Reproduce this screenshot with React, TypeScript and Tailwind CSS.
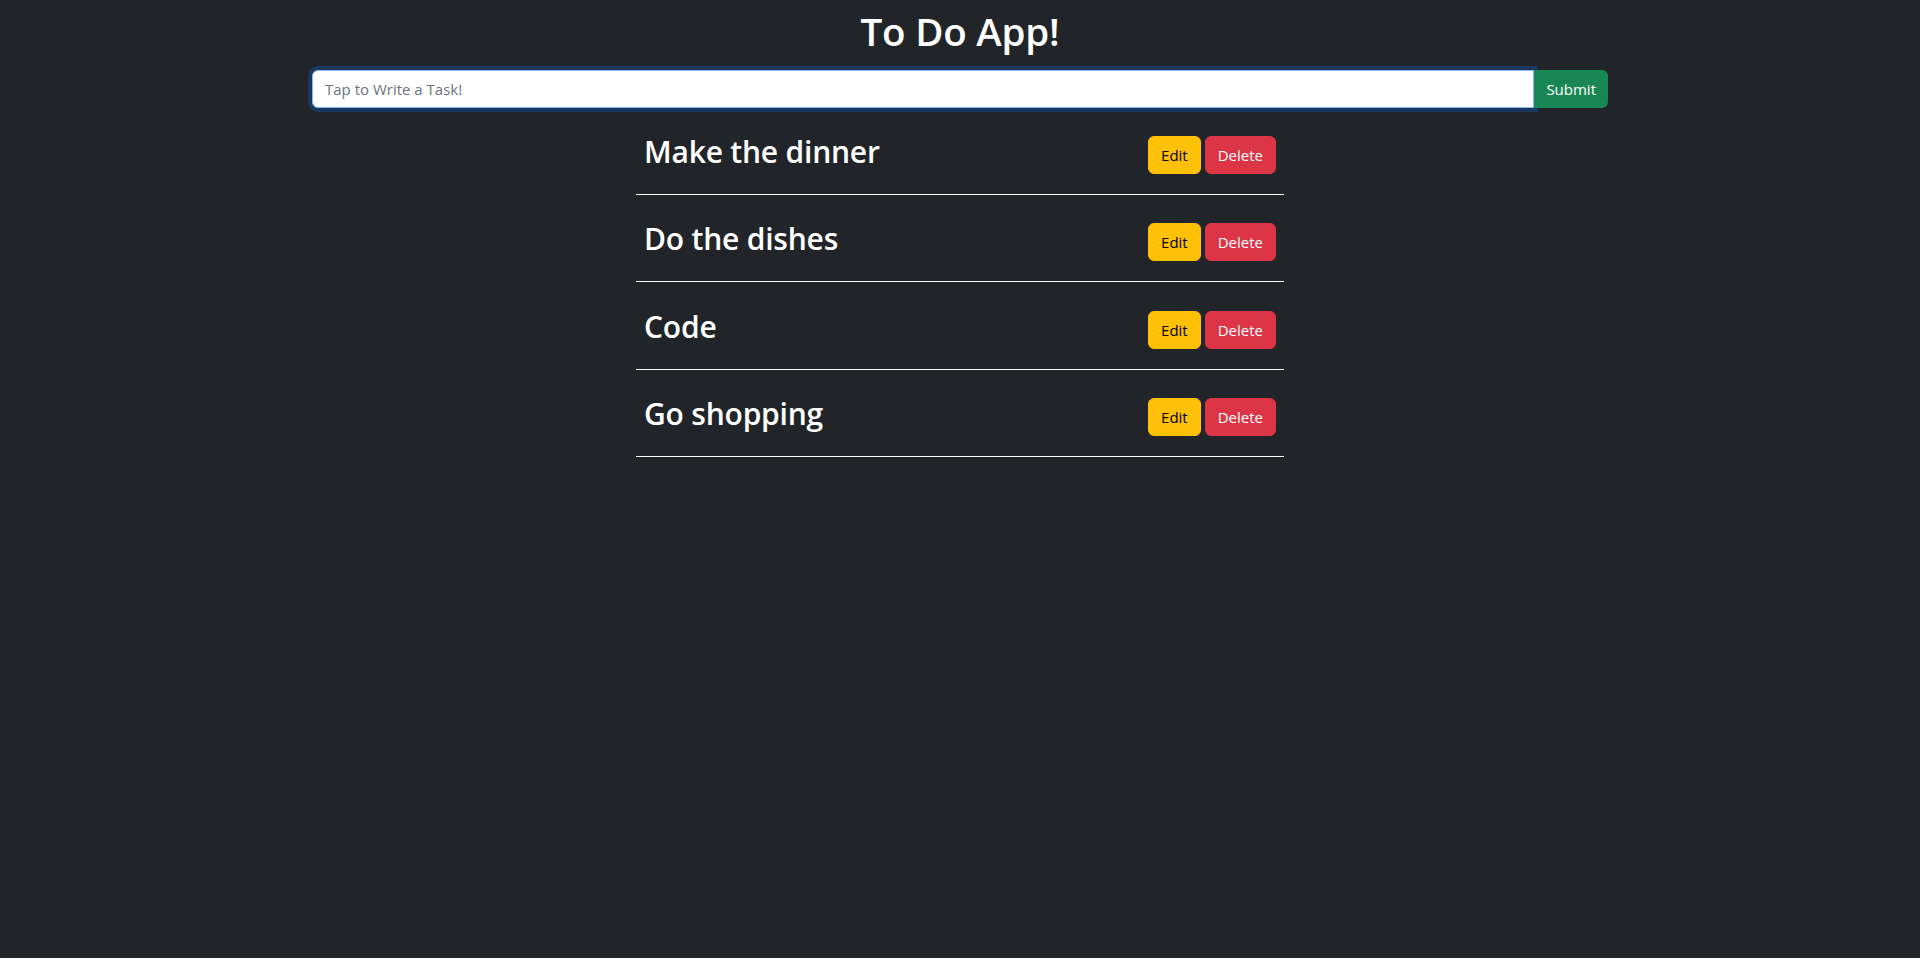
import { useState } from "react";

const TASKS = ["Make the dinner", "Do the dishes", "Code", "Go shopping"];

export default function App() {
  const [text, setText] = useState("");

  return (
    <div
      className="h-[958px] bg-[#212529] text-white"
      style={{ fontFamily: '"Open Sans", "Noto Sans", sans-serif' }}
    >
      <div className="mx-auto max-w-[1320px] px-3">
        {/* Title */}
        <h1 className="pt-[7px] text-center text-[38.5px] font-semibold leading-[48px] tracking-[-0.2px]">
          To Do App!
        </h1>

        {/* Task input */}
        <form
          className="mt-[15px] flex h-[38px]"
          onSubmit={(e) => e.preventDefault()}
        >
          <input
            autoFocus
            value={text}
            onChange={(e) => setText(e.target.value)}
            placeholder="Tap to Write a Task!"
            className="h-full flex-1 rounded-l-md border border-[#86b7fe] bg-white px-3 text-[15px] text-[#212529] outline-none ring-4 ring-[#0d6efd]/25 placeholder:text-[#6c757d]"
          />
          <button
            type="submit"
            className="h-full rounded-r-md bg-[#198754] px-3 text-[15px] text-white"
          >
            Submit
          </button>
        </form>

        {/* Task list */}
        <ul className="mx-auto -mt-px w-[648px]">
          {TASKS.map((task) => (
            <li
              key={task}
              className="flex h-[87.5px] items-center justify-between border-b border-white px-2 pt-[9px]"
            >
              <h2 className="mb-[6px] text-[30px] font-semibold leading-[38px] tracking-[-0.2px]">
                {task}
              </h2>
              <div className="flex gap-1">
                <button className="h-[38px] rounded-md border border-[#ffc107] bg-[#ffc107] px-3 text-[15px] text-black">
                  Edit
                </button>
                <button className="h-[38px] rounded-md border border-[#dc3545] bg-[#dc3545] px-3 text-[15px] text-white">
                  Delete
                </button>
              </div>
            </li>
          ))}
        </ul>
      </div>
    </div>
  );
}
